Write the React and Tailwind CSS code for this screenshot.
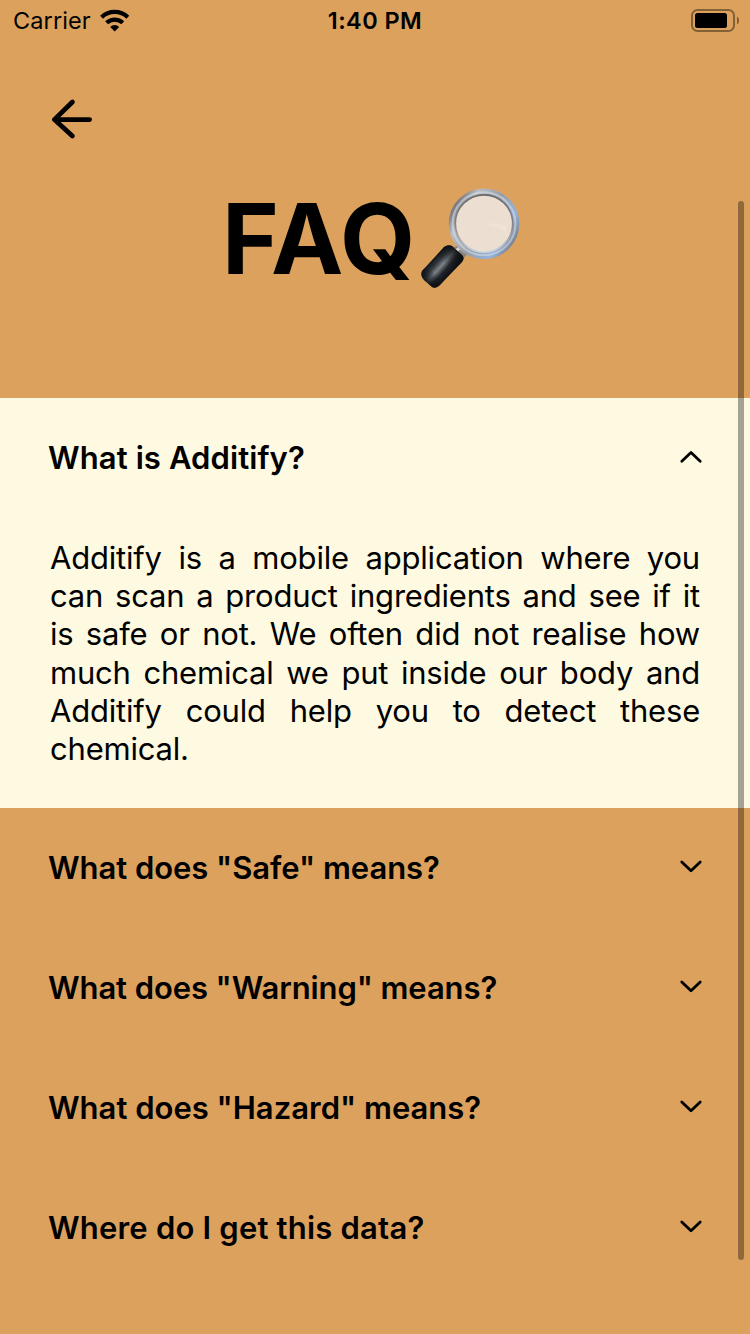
const questions = [
  { text: 'What does "Safe" means?', tracking: 'tracking-[-0.05px]' },
  { text: 'What does "Warning" means?', tracking: 'tracking-[-0.1px]' },
  { text: 'What does "Hazard" means?', tracking: 'tracking-[0px]' },
  { text: 'Where do I get this data?', tracking: 'tracking-[0.2px]' },
];
const lines = [
  'Additify is a mobile application where you',
  'can scan a product ingredients and see if it',
  'is safe or not. We often did not realise how',
  'much chemical we put inside our body and',
  'Additify could help you to detect these',
];

function Chevron({ up }) {
  return (
    <svg className="w-[24px] h-[16px]" viewBox="0 0 24 16" fill="none" stroke="#000" strokeWidth="2.8" strokeLinecap="round" strokeLinejoin="round">
      <path d={up ? 'M2.8 11.2 12 2.4 21.2 11.2' : 'M2.8 2 12 10.8 21.2 2'} />
    </svg>
  );
}

function Wifi() {
  return (
    <svg className="w-[30px] h-[23px]" viewBox="0 0 30 23" fill="none" stroke="#000" strokeWidth="4.2">
      <path d="M1.6 8.2a19 19 0 0 1 26.2 0" />
      <path d="M6.6 13.8a11.8 11.8 0 0 1 16.2 0" />
      <path d="M10.2 17.9a6.4 6.4 0 0 1 9 0L14.7 22.4Z" fill="#000" stroke="none" />
    </svg>
  );
}

function Battery() {
  return (
    <svg className="w-[48px] h-[23px]" viewBox="0 0 48 23">
      <rect x="1" y="1" width="42" height="21" rx="5.5" fill="none" stroke="#000" strokeOpacity="0.4" strokeWidth="2" />
      <rect x="4" y="4" width="32" height="15" rx="2.5" />
      <path d="M46 7.5q2 1.2 2 4t-2 4Z" fillOpacity="0.45" />
    </svg>
  );
}

function Magnifier() {
  return (
    <svg className="w-[104px] h-[104px] shrink-0" viewBox="0 0 104 104">
      <defs>
        <linearGradient id="handle" gradientUnits="userSpaceOnUse" x1="15" y1="74" x2="33" y2="90">
          <stop offset="0" stopColor="#15191c" />
          <stop offset="0.2" stopColor="#30373b" />
          <stop offset="0.42" stopColor="#7b8288" />
          <stop offset="0.65" stopColor="#20252a" />
          <stop offset="1" stopColor="#080a0c" />
        </linearGradient>
        <linearGradient id="shade" gradientUnits="userSpaceOnUse" x1="38" y1="64" x2="10" y2="98">
          <stop offset="0" stopColor="#0b0e11" stopOpacity="0.85" />
          <stop offset="0.4" stopColor="#0b0e11" stopOpacity="0" />
          <stop offset="0.7" stopColor="#0b0e11" stopOpacity="0" />
          <stop offset="1" stopColor="#0b0e11" stopOpacity="0.9" />
        </linearGradient>
        <linearGradient id="rim" x1="0" y1="0.2" x2="1" y2="0.8">
          <stop offset="0" stopColor="#69696d" />
          <stop offset="0.2" stopColor="#b9bec4" />
          <stop offset="0.5" stopColor="#959eaa" />
          <stop offset="0.8" stopColor="#94b3dd" />
          <stop offset="1" stopColor="#777c86" />
        </linearGradient>
        <linearGradient id="inner" x1="0" y1="0" x2="0" y2="1">
          <stop offset="0" stopColor="#67676b" />
          <stop offset="0.55" stopColor="#8c8486" />
          <stop offset="1" stopColor="#c8d5e2" />
        </linearGradient>
      </defs>
      <path d="M35 62 42 58 50 67 46 72Z" fill="#8e8581" />
      <path d="M38 65 44 60" stroke="#e2d2cc" strokeWidth="3" />
      <circle cx="66" cy="37.8" r="32" fill="none" stroke="url(#rim)" strokeWidth="6.5" />
      <circle cx="66" cy="37.8" r="31.5" fill="none" stroke="#dfe5eb" strokeWidth="2" strokeOpacity="0.5" />
      <circle cx="66" cy="37.6" r="28.7" fill="#ecdfd1" stroke="url(#inner)" strokeWidth="1.6" />
      <path d="M69 39q9-5 20 1l-1 6q-9-5-19-7Z" fill="#f3e9df" fillOpacity="0.4" />
      <path d="M26 61q4-3 8-1l10 9q3 3 0 7L22 99q-4 4-8 2L6 94q-4-4-2-9Z" fill="url(#handle)" />
      <path d="M26 61q4-3 8-1l10 9q3 3 0 7L22 99q-4 4-8 2L6 94q-4-4-2-9Z" fill="url(#shade)" />
    </svg>
  );
}

export default function App() {
  return (
    <main className="relative w-[750px] h-[1334px] overflow-hidden bg-[#dca15d] text-black font-[Inter,sans-serif]">
      <div className="h-[40px] pl-[13px] pr-[11px] grid grid-cols-[1fr_auto_1fr] items-center text-[23.5px]">
        <div className="flex items-center gap-[9px]">
          <span className="pt-[2px] tracking-[0.1px]">Carrier</span>
          <Wifi />
        </div>
        <span className="pt-[2px] -ml-[2px] font-semibold tracking-[0.45px]">1:40 PM</span>
        <div className="flex justify-end"><Battery /></div>
      </div>
      <header className="h-[358px] flex flex-col">
        <svg className="ml-[50px] mt-[58px] w-[44px] h-[44px]" viewBox="0 0 44 44" fill="none" stroke="#000" strokeWidth="4.8" strokeLinecap="round" strokeLinejoin="round">
          <path d="M39.6 21.6H4.4M22.4 4 4.4 21.6 22.4 38" />
        </svg>
        <h1 className="mt-[38px] pl-[222px] flex font-bold text-[97px] leading-[118px] tracking-[0.8px]">
          <span className="w-[196px]">FAQ</span>
          <span className="pt-[6px]"><Magnifier /></span>
        </h1>
      </header>
      <section className="h-[410px] bg-[#fef9e1]">
        <div className="h-[120px] pl-[48px] pr-[47px] flex items-center justify-between">
          <h2 className="text-[31px] font-semibold tracking-[0.1px]">What is Additify?</h2>
          <Chevron up />
        </div>
        <div className="mt-[21px] ml-[50px] mr-[50px] text-[31px] leading-[38.2px] tracking-[-0.2px]">
          {lines.map((line) => (
            <p key={line} className="[text-align-last:justify]">{line}</p>
          ))}
          <p>chemical.</p>
        </div>
      </section>
      {questions.map(({ text, tracking }) => (
        <div key={text} className="h-[120px] pl-[48px] pr-[47px] flex items-center justify-between">
          <h2 className={`text-[31px] font-semibold ${tracking}`}>{text}</h2>
          <Chevron />
        </div>
      ))}
      <div className="absolute top-[201px] right-[6px] w-[6px] h-[1059px] rounded-full bg-black/35" />
    </main>
  );
}
